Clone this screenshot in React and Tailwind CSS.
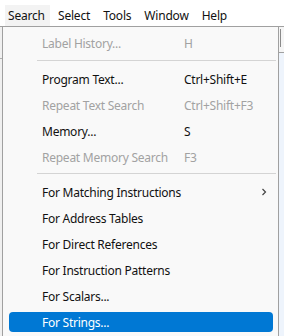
const font = { fontFamily: '"Noto Sans", "Liberation Sans", sans-serif' };

const menus = ['Search', 'Select', 'Tools', 'Window', 'Help'];

const groups = [
  [
    { label: 'Label History...', key: 'H', disabled: true },
  ],
  [
    { label: 'Program Text...', key: 'Ctrl+Shift+E' },
    { label: 'Repeat Text Search', key: 'Ctrl+Shift+F3', disabled: true },
    { label: 'Memory...', key: 'S' },
    { label: 'Repeat Memory Search', key: 'F3', disabled: true },
  ],
  [
    { label: 'For Matching Instructions', sub: true },
    { label: 'For Address Tables' },
    { label: 'For Direct References' },
    { label: 'For Instruction Patterns' },
    { label: 'For Scalars...' },
    { label: 'For Strings...', active: true },
  ],
];

function Item({ item }) {
  return (
    <div className="h-[26px] pt-[2px] pl-[6px] pr-[5px]">
      <div
        className={
          'h-[20px] flex items-center rounded-[4px] text-[12px] leading-[20px] tracking-[-0.25px] ' +
          (item.active ? 'bg-[#0078d4] text-white' : item.disabled ? 'text-[#a2a2a2]' : 'text-[#111]')
        }
      >
        <span className="w-[175px] pl-[33px] pt-[1px] whitespace-nowrap">{item.label}</span>
        <span className="flex-1 pt-[1px] whitespace-nowrap">{item.key}</span>
        {item.sub && (
          <svg width="8" height="10" viewBox="0 0 8 10" className="mr-[5px]">
            <path d="M2.5 2 L5.5 5 L2.5 8" fill="none" stroke="#444" strokeWidth="1.2" />
          </svg>
        )}
      </div>
    </div>
  );
}

export default function App() {
  return (
    <div className="w-[284px] h-[336px] overflow-hidden bg-white flex flex-col" style={font}>
      <div className="h-[27px] shrink-0 flex items-start pt-[5px] border-b border-[#a0a0a0] text-[12px] text-[#111] tracking-[-0.2px]">
        {menus.map((m, i) => (
          <div
            key={m}
            className={
              'h-[21px] leading-[21px] ' +
              (i === 0 ? 'ml-[5px] pl-[3px] w-[45px] bg-[#f3f3f3] ' : i === 1 ? 'ml-[8px] ' : 'ml-[13px] ')
            }
          >
            {m}
          </div>
        ))}
      </div>
      <div className="flex-1 flex min-h-0">
        <div className="w-[2px] bg-[#f0f0f0] flex flex-col">
          <div className="h-[31px]" />
          <div className="h-[1px] bg-[#b0b0b0]" />
        </div>
        <div className="w-[277px] border-l border-r border-[#a0a0a0] bg-[#f9f9f9] pt-[4px]">
          {groups.map((g, gi) => (
            <div key={gi}>
              {gi > 0 && (
                <div className={gi === 1 ? 'h-[10px] pt-[3px] pl-[34px] pr-[2px]' : 'h-[9px] pt-[2px] pl-[34px] pr-[2px]'}>
                  <div className="h-[1px] bg-[#d4d4d4]" />
                </div>
              )}
              {g.map((it) => (
                <Item key={it.label} item={it} />
              ))}
            </div>
          ))}
        </div>
        <div className="flex-1 flex flex-col">
          <div className="h-[25px] bg-[#f5f5f5] flex pt-[2px] pl-[1px]">
            <div className="w-[1px] h-[18px] bg-[#8a8a8a]" />
          </div>
          <div className="h-[1px] bg-[#a0a0a0]" />
          <div className="flex-1 bg-[#eef4fc]" />
        </div>
      </div>
    </div>
  );
}
